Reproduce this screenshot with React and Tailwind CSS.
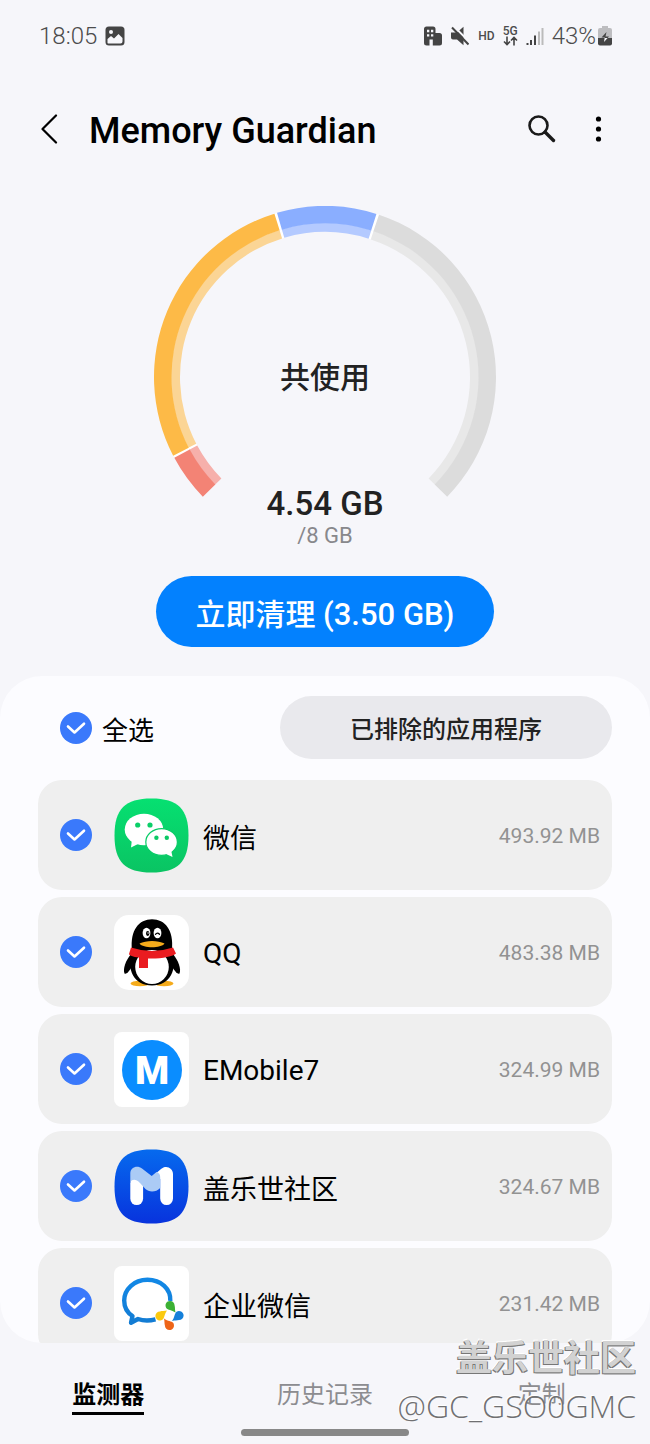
import React, { useState } from 'react';

const polar = (r, deg) => {
  const a = (deg * Math.PI) / 180;
  return `${(171 + r * Math.sin(a)).toFixed(2)} ${(171 - r * Math.cos(a)).toFixed(2)}`;
};

// ring slice between two angles, 0deg is straight up
const slice = (outer, inner, from, to) => {
  const large = to - from > 180 ? 1 : 0;
  return `M${polar(outer, from)} A${outer} ${outer} 0 ${large} 1 ${polar(outer, to)} L${polar(inner, to)} A${inner} ${inner} 0 ${large} 0 ${polar(inner, from)} Z`;
};

const segments = [
  { from: -134.4, to: -118.2, color: '#f38375', light: '#f6b0ab' },
  { from: -117.4, to: -17.2, color: '#fdba47', light: '#fbd595' },
  { from: -16.3, to: 17.5, color: '#8aaeff', light: '#b4caff' },
  { from: 18.4, to: 134.4, color: '#dcdcdc', light: '#e8e8e8' },
];

const Gauge = () => (
  <svg viewBox="0 0 342 292" className="w-[342px] h-[292px] col-start-1 row-start-1" aria-hidden="true">
    <path d={slice(171, 145, -118.4, -117.2)} fill="#fff" />
    <path d={slice(171, 145, -17.4, -16.1)} fill="#fff" />
    <path d={slice(171, 145, 17.3, 18.6)} fill="#fff" />
    {segments.map((s) => (
      <g key={s.from}>
        <path d={slice(154, 145, s.from, s.to)} fill={s.light} />
        <path d={slice(171, 153.5, s.from, s.to)} fill={s.color} />
      </g>
    ))}
  </svg>
);

const SQUIRCLE = 'M37.5.5C64 .5 74.5 11 74.5 37.5S64 74.500 37.5 74.500.5 64 .5 37.5 11 .5 37.5.5Z';

const WeChatIcon = () => (
  <svg viewBox="0 0 75 75" className="w-[75px] h-[75px]">
    <defs>
      <linearGradient id="wechat" x1="0" y1="0" x2="0" y2="1">
        <stop offset="0" stopColor="#06e071" />
        <stop offset="1" stopColor="#0ac463" />
      </linearGradient>
    </defs>
    <path d={SQUIRCLE} fill="url(#wechat)" />
    <ellipse cx="30" cy="31.5" rx="19.3" ry="15.8" fill="#fff" />
    <path d="M18 41 17 49.5 26 45Z" fill="#fff" />
    <circle cx="23.7" cy="27" r="2.6" fill="#0bcf68" />
    <circle cx="36" cy="27" r="2.6" fill="#0bcf68" />
    <ellipse cx="47.6" cy="44" rx="15.8" ry="13.4" fill="#fff" stroke="#08cc66" strokeWidth="1.2" />
    <path d="M51 55.5 58.5 59 57 51.5Z" fill="#fff" />
    <circle cx="42.4" cy="39.7" r="2.2" fill="#0bc965" />
    <circle cx="52.8" cy="39.7" r="2.2" fill="#0bc965" />
  </svg>
);

const QQIcon = () => (
  <svg viewBox="0 0 75 75" className="w-[75px] h-[75px]">
    <rect width="75" height="75" rx="15" fill="#fff" />
    <ellipse cx="26" cy="68.5" rx="9.5" ry="2.8" fill="#f5ab1b" />
    <ellipse cx="50" cy="68.5" rx="9.5" ry="2.8" fill="#f5ab1b" />
    <path d="M17 39C12 45 8.5 54 10.5 58.5 12.5 60 16 55 19 50Z" fill="#000" />
    <path d="M59 39C64 45 67.5 54 65.5 58.5 63.5 60 60 55 57 50Z" fill="#000" />
    <path d="M18 35C16 15 25 4.2 38 4.2S60 15 58 35C64 55 56 70.5 38 70.5S12 55 18 35Z" fill="#000" />
    <ellipse cx="38" cy="52" rx="16.8" ry="17" fill="#fff" />
    <ellipse cx="32.5" cy="18" rx="3.9" ry="5.3" fill="#fff" />
    <ellipse cx="43.5" cy="18" rx="3.9" ry="5.3" fill="#fff" />
    <ellipse cx="33.7" cy="18.5" rx="1.7" ry="2.4" fill="#000" />
    <circle cx="34.1" cy="18" r=".7" fill="#fff" />
    <path d="M41.5 19.3Q43.3 16.8 45.5 19.3" fill="none" stroke="#000" strokeWidth="1.3" strokeLinecap="round" />
    <path d="M25.5 28.5C32 25 44 25 50.5 28.5 47 33.5 29 33.5 25.5 28.5Z" fill="#f5ab1b" />
    <path d="M17 32.5Q38 39.5 59 32.5L62 38.5C59 41.5 47 44 34 43.5V53H25V42.5C19 42 15 40 15 39Z" fill="#ea1c20" />
  </svg>
);

const EMobileIcon = () => (
  <svg viewBox="0 0 75 75" className="w-[75px] h-[75px]">
    <rect width="75" height="75" rx="8" fill="#fff" />
    <circle cx="38" cy="38" r="30" fill="#0a8dff" />
    <text x="38" y="52" textAnchor="middle" fontSize="39" className="font-black" fill="#fff">M</text>
  </svg>
);

const CommunityIcon = () => (
  <svg viewBox="0 0 75 75" className="w-[75px] h-[75px]">
    <defs>
      <linearGradient id="community" x1="0" y1="0" x2="0" y2="1">
        <stop offset="0" stopColor="#066aee" />
        <stop offset="1" stopColor="#0833dd" />
      </linearGradient>
    </defs>
    <path d={SQUIRCLE} fill="url(#community)" />
    <rect x="16.3" y="28" width="12.8" height="28" rx="6.4" fill="#fff" />
    <path d="M40 26 47 20C52 15.5 59 19 59 25V49.6a6.4 6.4 0 0 1-12.8 0V30Z" fill="#fff" />
    <path d="M16.3 33V24.5C16.3 18 23.5 16 28 19.5L37.7 27 42.5 23Q46.2 24 46.2 28V39C42 43.5 35 43.5 31.5 40L26 34C22 29.500 18 30 16.300 33Z" fill="#abcbf5" />
  </svg>
);

const WeComIcon = () => (
  <svg viewBox="0 0 75 75" className="w-[75px] h-[75px]">
    <defs>
      <linearGradient id="wecom" x1="0" y1="0" x2="0" y2="1">
        <stop offset="0" stopColor="#1288e6" />
        <stop offset="1" stopColor="#137cd3" />
      </linearGradient>
      <path id="drop" d="M0-4.6A4.6 4.6 0 0 0-3.8 2.4C-2 4.800 1.500 4 5.500 7 4.800 4 5.200 2 4.600 0A4.6 4.6 0 0 0 0-4.6Z" />
    </defs>
    <rect width="75" height="75" rx="8" fill="#fff" />
    <path d="M56.3 35C57 23 47 13.8 33.4 13.8S10.200 23.500 10.200 34.500C10.200 41 13 46.500 18.500 50L17 56.800 24 53C30 55 36 54.700 41.500 53.300" fill="none" stroke="url(#wecom)" strokeWidth="4.4" strokeLinejoin="round" />
    <use href="#drop" transform="translate(56 39.5)" fill="#3cb034" />
    <use href="#drop" transform="translate(65 49.5) rotate(90)" fill="#1580da" />
    <use href="#drop" transform="translate(55.5 59.5) rotate(180)" fill="#ee6518" />
    <use href="#drop" transform="translate(46 50) rotate(270)" fill="#fbc90e" />
  </svg>
);

const apps = [
  { name: '微信', size: '493.92 MB', Icon: WeChatIcon },
  { name: 'QQ', size: '483.38 MB', Icon: QQIcon, latin: true },
  { name: 'EMobile7', size: '324.99 MB', Icon: EMobileIcon, latin: true },
  { name: '盖乐世社区', size: '324.67 MB', Icon: CommunityIcon },
  { name: '企业微信', size: '231.42 MB', Icon: WeComIcon },
];

const tabs = ['监测器', '历史记录', '定制'];

const Check = ({ checked, onChange }) => (
  <span className="grid shrink-0 w-8 h-8">
    <input
      type="checkbox"
      checked={checked}
      onChange={onChange}
      className="peer col-start-1 row-start-1 appearance-none w-8 h-8 rounded-full border-2 border-gray-300 checked:border-0 checked:bg-[#3a79fb]"
    />
    <svg viewBox="0 0 32 32" className="col-start-1 row-start-1 hidden peer-checked:block pointer-events-none">
      <path d="M8 14.5 14.5 20.5 24 11.7" fill="none" stroke="#fff" strokeWidth="2.6" strokeLinecap="round" strokeLinejoin="round" />
    </svg>
  </span>
);

const StatusBar = () => (
  <div className="flex justify-between items-center h-[72px] shrink-0 pl-[39px] pr-[38px] text-2xl text-[#4c4c4c]">
    <div className="flex items-center gap-2">
      <span className="font-light">18:05</span>
      <svg viewBox="0 0 20 20" className="w-5 h-5">
        <rect x=".5" y=".5" width="19" height="19" rx="3.5" fill="#444" />
        <circle cx="6" cy="6" r="2" fill="#f7f7fb" />
        <path d="M2.5 17V13L6 10 9 12.5 13.5 8 17.5 12V15.5Q17.5 17.5 15.5 17.5H3Z" fill="#f7f7fb" />
      </svg>
    </div>
    <div className="flex items-center">
      <svg viewBox="0 0 18 20" className="w-[18px] h-5 mr-[9px]" fill="#444">
        <path d="M2.5.5H9Q11.5.5 11.5 3V7H15.5Q18 7 18 9.5V17Q18 19.5 15.5 19.5H8.800V13.5H5.5V19.5H2.5Q0 19.5 0 17V3Q0 .5 2.5.5Z" />
        <path d="M3 3.8H5.3V6.2H3ZM7 3.8H9.3V6.2H7ZM3 8.2H5.3V10.5H3ZM7 8.2H9.3V10.5H7Z" fill="#f7f7fb" />
      </svg>
      <svg viewBox="0 0 18 20" className="w-[18px] h-5 mr-[9px]">
        <path d="M0 6.5H6L12.5.8V19.2L6 13.5H2Q0 13.5 0 11.5Z" fill="#444" />
        <path d="M2.5 0 18 15.5" stroke="#f7f7fb" strokeWidth="2" />
        <path d="M1 1.5 17.5 18.5" stroke="#444" strokeWidth="2" />
      </svg>
      <span className="text-xs leading-4 font-medium mr-2">HD</span>
      <span className="flex flex-col items-center mr-2">
        <span className="text-xs leading-[10px] font-medium">5G</span>
        <svg viewBox="0 0 15 10" className="w-[15px] h-[10px]" fill="none" stroke="#444" strokeWidth="1.6">
          <path d="M4 .5V8M1 5.5 4 8.500 7 5.5M11 9.5V2M8 4.5 11 1.5 14 4.5" />
        </svg>
      </span>
      <svg viewBox="0 0 18 18" className="w-[18px] h-[18px] mr-2">
        <path d="M.5 16H2.5V18H.5ZM4 13H6V18H4ZM8 8.5H10V18H8Z" fill="#444" />
        <path d="M12 4.5H14V18H12ZM15.5 1H17.5V18H15.5Z" fill="#bbb" />
      </svg>
      <span className="font-light">43%</span>
      <svg viewBox="0 0 14 20" className="w-[14px] h-5 ml-[2px]">
        <path d="M4 0H10V2H12Q14 2 14 4V12H0V4Q0 2 2 2H4Z" fill="#bdbdc0" />
        <path d="M0 12H14V17.5Q14 19.5 12 19.5H2Q0 19.5 0 17.5Z" fill="#444" />
        <path d="M8.5 6 3.5 11.5H7L6 16 11 10.5H7.5Z" fill="#444" />
        <path d="M6.6 12H9.6L6 16Z" fill="#f7f7fb" />
      </svg>
    </div>
  </div>
);

const App = () => {
  const [selected, setSelected] = useState(apps.map((a) => a.name));
  const [activeTab, setActiveTab] = useState('监测器');

  const toggle = (name) => {
    setSelected(selected.includes(name) ? selected.filter((n) => n !== name) : [...selected, name]);
  };

  const toggleAll = () => {
    setSelected(selected.length === apps.length ? [] : apps.map((a) => a.name));
  };

  return (
    <div className="relative flex flex-col h-screen overflow-hidden bg-[#f6f6fa] text-black font-[Roboto,'Noto_Sans_CJK_SC',sans-serif]">
      <StatusBar />

      {/* Header */}
      <header className="flex items-center h-[114px] shrink-0 pl-10 pr-9">
        <button aria-label="Back" className="w-[18px]">
          <svg viewBox="0 0 18 30" className="w-[18px] h-[30px]">
            <path d="M16 1.5 2.5 15 16 28.5" fill="none" stroke="#000" strokeWidth="2.2" strokeLinecap="round" strokeLinejoin="round" />
          </svg>
        </button>
        <h1 className="flex-1 ml-[31px] pt-1 text-[36px] leading-[44px] font-medium">Memory Guardian</h1>
        <button aria-label="Search" className="w-7">
          <svg viewBox="0 0 28 28" className="w-7 h-7" fill="none" stroke="#1a1a1a">
            <circle cx="10.5" cy="10.5" r="9" strokeWidth="2.6" />
            <path d="M17 17 25.5 25.5" strokeWidth="3.4" strokeLinecap="round" />
          </svg>
        </button>
        <button aria-label="More options" className="w-8 ml-[26px]">
          <svg viewBox="0 0 32 28" className="w-8 h-7">
            <circle cx="16.5" cy="4" r="2.6" />
            <circle cx="16.5" cy="14" r="2.6" />
            <circle cx="16.5" cy="24" r="2.6" />
          </svg>
        </button>
      </header>

      {/* Usage */}
      <section className="flex flex-col items-center shrink-0 pt-5 text-[#222]">
        <div className="grid place-items-center">
          <Gauge />
          <p className="col-start-1 row-start-1 pt-[52px] text-[30px] leading-9 font-medium">共使用</p>
        </div>
        <p className="-mt-[14px] text-[33px] leading-10 font-medium">4.54 GB</p>
        <p className="text-[22px] leading-6 text-[#88888c]">/8 GB</p>
        <button className="mt-7 pt-2 w-[338px] h-[71px] rounded-full bg-[#0381fe] text-white text-[30px] font-medium">
          立即清理 <span className="text-[31px]">(3.50 GB)</span>
        </button>
      </section>

      {/* App list */}
      <main className="flex-1 min-h-0 mt-[29px] px-[38px] pt-5 overflow-hidden rounded-[42px] bg-[#fcfcff]">
        <div className="flex items-center justify-between pl-[22px] mb-[21px]">
          <label className="flex items-center gap-[10px] text-[26px]">
            <Check checked={selected.length === apps.length} onChange={toggleAll} />
            <span className="pt-2">全选</span>
          </label>
          <button className="pt-1 w-[332px] h-[63px] rounded-full bg-[#e9e9ed] text-[#222] text-2xl font-medium">
            已排除的应用程序
          </button>
        </div>
        <ul className="flex flex-col gap-[7px]">
          {apps.map(({ name, size, Icon, latin }) => (
            <li key={name}>
              <label className="flex items-center h-[110px] pl-[22px] pr-3 rounded-3xl bg-[#efefef]">
                <Check checked={selected.includes(name)} onChange={() => toggle(name)} />
                <span className="ml-[22px] mr-[14px] shrink-0">
                  <Icon />
                </span>
                <span className={`flex-1 ${latin ? 'pt-1 text-[28px]' : 'pt-2 text-[27px]'}`}>{name}</span>
                <span className="pt-1 text-[21px] text-[#929292]">{size}</span>
              </label>
            </li>
          ))}
        </ul>
      </main>

      {/* Bottom tabs */}
      <nav className="grid grid-cols-3 shrink-0 h-[86px] pt-8 justify-items-center items-start">
        {tabs.map((tab) => (
          <button
            key={tab}
            onClick={() => setActiveTab(tab)}
            className={`h-10 text-2xl leading-10 ${
              activeTab === tab
                ? 'font-bold text-black border-b-3 border-black'
                : 'text-[#8c8c90]'
            }`}
          >
            {tab}
          </button>
        ))}
      </nav>
      <div className="shrink-0 self-center w-[168px] h-[7px] mb-2 rounded-full bg-[#888]" />

      {/* Watermark */}
      <div className="absolute right-[14px] bottom-0 flex flex-col items-end h-[108px] pointer-events-none">
        <span className="text-[36px] leading-[46px] font-bold text-[#d2d2d2] [text-shadow:1px_1px_0_#777,-1px_1px_0_#777,-1px_-1px_0_#fff]">
          盖乐世社区
        </span>
        <span className="text-[32px] leading-[48px] text-[#707072] font-['Open_Sans',sans-serif] font-light [text-shadow:-1px_-1px_0_#fff]">
          @GC_GSO0GMC
        </span>
      </div>
    </div>
  );
};

export default App;
